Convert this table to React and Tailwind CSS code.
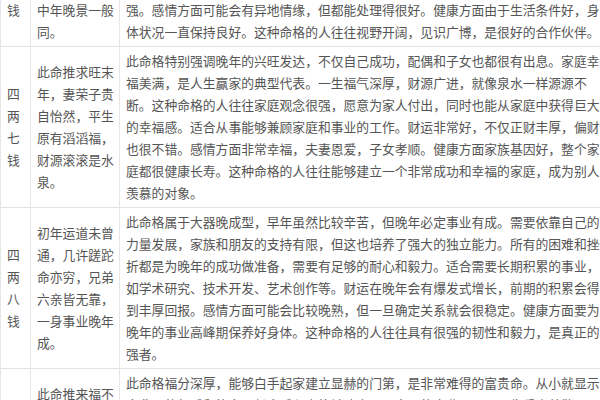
import React from "react";

const rows = [
  {
    top: true,
    name: ["钱"],
    poem: ["中年晚景一般", "同。"],
    text: [
      "强。感情方面可能会有异地情缘，但都能处理得很好。健康方面由于生活条件好，身",
      "体状况一直保持良好。这种命格的人往往视野开阔，见识广博，是很好的合作伙伴。",
    ],
  },
  {
    name: ["四", "两", "七", "钱"],
    poem: ["此命推求旺末", "年，妻荣子贵", "自怡然，平生", "原有滔滔福，", "财源滚滚是水", "泉。"],
    text: [
      "此命格特别强调晚年的兴旺发达，不仅自己成功，配偶和子女也都很有出息。家庭幸",
      "福美满，是人生赢家的典型代表。一生福气深厚，财源广进，就像泉水一样源源不",
      "断。这种命格的人往往家庭观念很强，愿意为家人付出，同时也能从家庭中获得巨大",
      "的幸福感。适合从事能够兼顾家庭和事业的工作。财运非常好，不仅正财丰厚，偏财",
      "也很不错。感情方面非常幸福，夫妻恩爱，子女孝顺。健康方面家族基因好，整个家",
      "庭都很健康长寿。这种命格的人往往能够建立一个非常成功和幸福的家庭，成为别人",
      "羡慕的对象。",
    ],
  },
  {
    name: ["四", "两", "八", "钱"],
    poem: ["初年运道未曾", "通，几许蹉跎", "命亦穷，兄弟", "六亲皆无靠，", "一身事业晚年", "成。"],
    text: [
      "此命格属于大器晚成型，早年虽然比较辛苦，但晚年必定事业有成。需要依靠自己的",
      "力量发展，家族和朋友的支持有限，但这也培养了强大的独立能力。所有的困难和挫",
      "折都是为晚年的成功做准备，需要有足够的耐心和毅力。适合需要长期积累的事业，",
      "如学术研究、技术开发、艺术创作等。财运在晚年会有爆发式增长，前期的积累会得",
      "到丰厚回报。感情方面可能会比较晚熟，但一旦确定关系就会很稳定。健康方面要为",
      "晚年的事业高峰期保养好身体。这种命格的人往往具有很强的韧性和毅力，是真正的",
      "强者。",
    ],
  },
  {
    name: ["四", "两", "九", "钱"],
    poem: ["此命推来福不", "浅，自成自立", "显门庭，从来", "富贵人钦敬，", "使婢差奴过一", "生。"],
    text: [
      "此命格福分深厚，能够白手起家建立显赫的门第，是非常难得的富贵命。从小就显示",
      "出非凡的气质和能力，长大后必定能够建立属于自己的事业王国，一生受人尊敬。",
      "适合从事管理、经营等需要领导才能的工作。财运亨通，家业兴旺，衣食无忧。",
      "感情方面婚姻美满，配偶贤良，能够成为事业上的得力助手。子女聪明孝顺，",
      "家庭和睦。健康方面体质良好，精力充沛。这种命格的人往往具有天生的领导",
      "气质，做事果断有魄力，能够赢得众人的信任和尊重，是真正的人生赢家，",
      "令人羡慕。",
    ],
  },
];

function Lines({ items }) {
  return items.map((l, i) => (
    <div key={i}>
      <span className="whitespace-nowrap">{l}</span>
    </div>
  ));
}

export default function App() {
  return (
    <div
      className="w-[600px] h-[400px] overflow-hidden bg-white text-[#555] text-[12.8px] leading-[22px]"
      style={{ fontFamily: '"Noto Sans CJK SC", "Noto Sans", sans-serif' }}
    >
      <table className="table-fixed border-collapse w-[600px] -mt-[1px]">
        <colgroup>
          <col className="w-[30px]" />
          <col className="w-[89px]" />
          <col />
        </colgroup>
        <tbody>
          {rows.map((r, i) => (
            <tr key={i} className="border-b border-[#e2e2e2]">
              <td
                className={`border-l border-r border-[#e6e6e6] pl-[6px] pr-0 ${
                  r.top ? "align-top pt-0 pb-[3px]" : "align-middle py-[3px]"
                }`}
              >
                <Lines items={r.name} />
              </td>
              <td
                className={`border-r border-[#e6e6e6] pl-[6px] pr-[4px] ${
                  r.top ? "align-top pt-0 pb-[3px]" : "align-middle py-[3px]"
                }`}
              >
                <Lines items={r.poem} />
              </td>
              <td
                className={`pl-[6px] pr-0 align-top ${
                  r.top ? "pt-0 pb-[3px]" : "py-[3px]"
                }`}
              >
                <Lines items={r.text} />
              </td>
            </tr>
          ))}
        </tbody>
      </table>
    </div>
  );
}
